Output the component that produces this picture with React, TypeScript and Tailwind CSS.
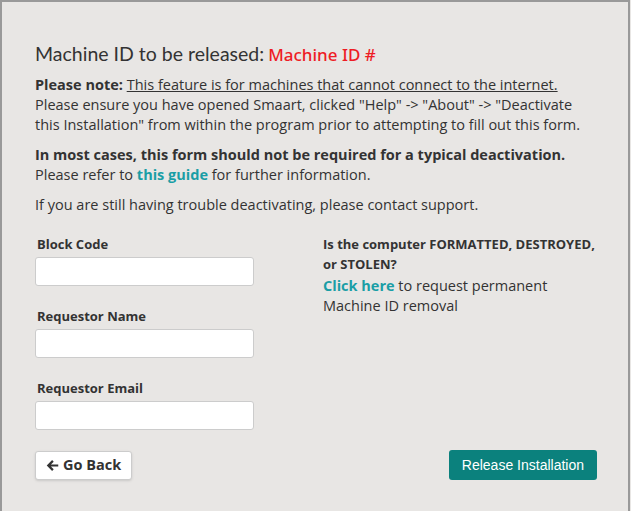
const fields = ['Block Code', 'Requestor Name', 'Requestor Email'];

function ArrowLeftSolid() {
  return (
    <svg viewBox="0 0 14 14" className="h-[13px] w-[13px]" fill="currentColor">
      <path d="M6.6 1.2 L0.8 7 L6.6 12.8 L8.3 11.1 L5.3 8.2 H13.2 V5.8 H5.3 L8.3 2.9 Z" />
    </svg>
  );
}

export default function App() {
  return (
    <div className="h-[511px] w-[631px] bg-[#e8e6e4] font-['Open_Sans',sans-serif] text-[#333]">
      <div className="h-[511px] w-[630px] border-l-2 border-t-2 border-r-2 border-[#999] pl-[33px] pr-[31px] pt-[40px]">
        <h2 className="flex items-baseline text-[19.5px] leading-[24px] font-['Lato',sans-serif] text-[#333] mb-[8px]">
          Machine ID to be released:
          <span className="ml-[4px] text-[17px] font-medium text-[#ee1c25] font-['Noto_Sans',sans-serif]">Machine ID #</span>
        </h2>

        <div className="text-[14.5px] leading-[20px]">
          <p className="mb-[10px]">
            <b className="font-bold">Please note:</b> <span className="underline">This feature is for machines that cannot connect to the internet.</span>
            <br />
            Please ensure you have opened Smaart, clicked "Help" -&gt; "About" -&gt; "Deactivate this Installation" from within the program prior to attempting to fill out this form.
          </p>
          <p className="mb-[10px]">
            <b className="font-bold">In most cases, this form should not be required for a typical deactivation.</b>
            <br />
            Please refer to <a className="font-bold text-[#1a9ea6]">this guide</a> for further information.
          </p>
          <p>If you are still having trouble deactivating, please contact support.</p>
        </div>

        <div className="mt-[19px] flex">
          <div className="w-[288px]">
            {fields.map((f) => (
              <div key={f} className="mb-[20px] pl-[2px]">
                <label className="block text-[13px] leading-[20px] font-bold mb-[3px]">{f}</label>
                <input className="block w-[219px] h-[29px] -ml-[2px] rounded-[3px] border border-[#ccc] bg-white" />
              </div>
            ))}
          </div>
          <div className="text-[13px] leading-[20px]">
            <p className="font-bold">Is the computer FORMATTED, DESTROYED,<br />or STOLEN?</p>
            <p className="text-[14.5px] mt-[2px]">
              <a className="font-bold text-[#1a9ea6]">Click here</a> to request permanent<br />Machine ID removal
            </p>
          </div>
        </div>

        <div className="flex items-center justify-between">
          <button className="flex h-[29px] items-center gap-[4px] rounded-[3px] border border-[#ccc] bg-white px-[10px] text-[14.5px] font-bold shadow-sm">
            <ArrowLeftSolid />
            Go Back
          </button>
          <button className="h-[30px] rounded-[3px] bg-[#0b817d] px-[13px] text-[14px] text-white font-['Liberation_Sans',sans-serif]">
            Release Installation
          </button>
        </div>
      </div>
    </div>
  );
}
